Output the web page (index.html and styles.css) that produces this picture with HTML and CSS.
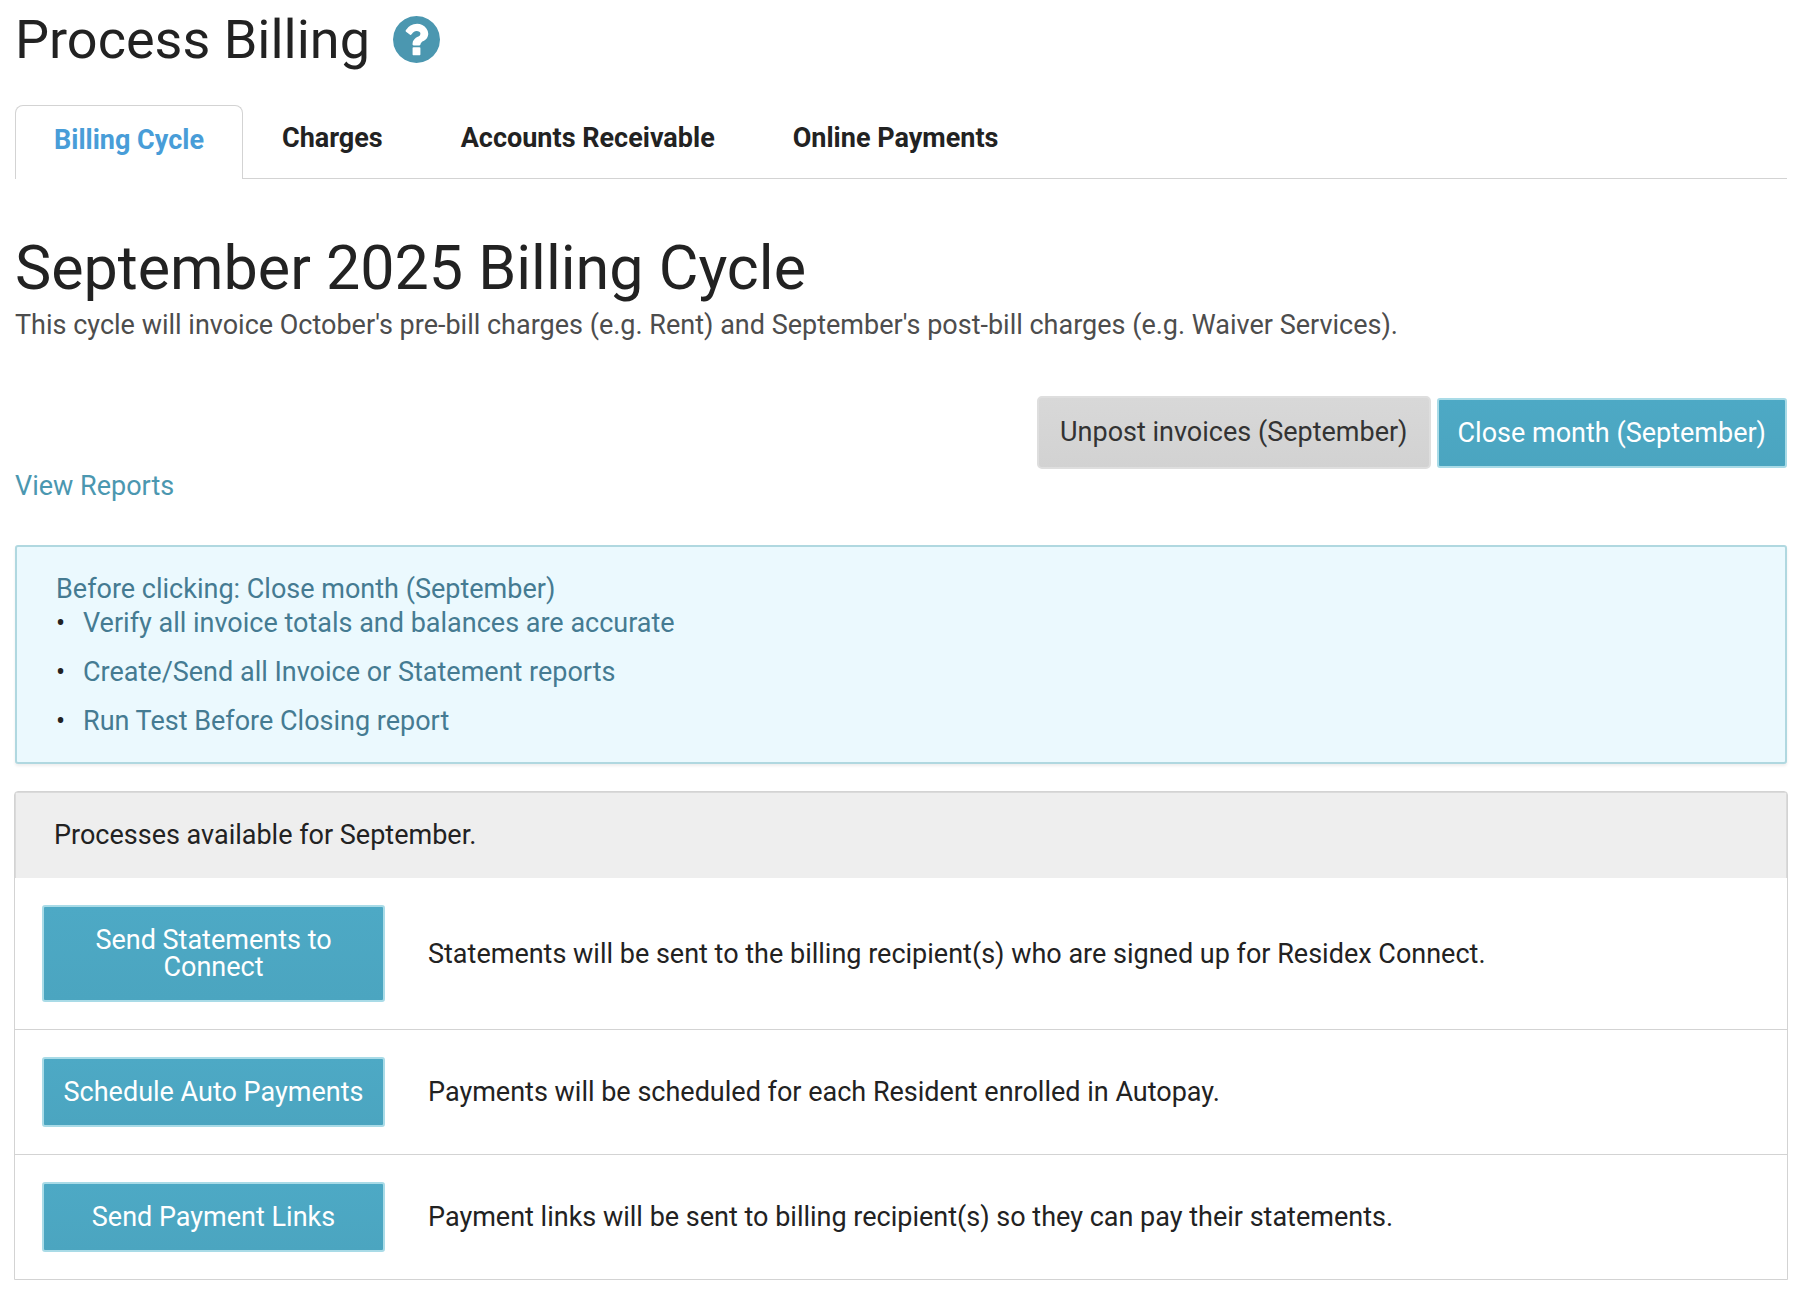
FILE: index.html
```html
<!DOCTYPE html>
<html lang="en">
<head>
  <meta charset="UTF-8">
  <title>Process Billing</title>
  <link rel="stylesheet" href="styles.css">
</head>
<body>
  <header class="page-header">
    <h1>Process Billing</h1>
    <a href="#" class="help" aria-label="Help">
      <svg viewBox="128 128 1536 1536" width="47" height="47" aria-hidden="true">
        <path fill="currentColor" d="M1024 1376v-192q0-14-9-23t-23-9h-192q-14 0-23 9t-9 23v192q0 14 9 23t23 9h192q14 0 23-9t9-23zM1280 704q0-88-55.5-163t-138.5-116-170-41q-243 0-371 213-15 24 8 42l132 100q7 6 19 6 16 0 25-12 53-68 86-92 34-24 86-24 48 0 85.500 26t37.500 59q0 38-20 61t-68 45q-63 28-115.500 86.500t-52.500 125.500v36q0 14 9 23t23 9h192q14 0 23-9t9-23q0-19 21.500-49.500t54.500-49.500q32-18 49-28.500t46-35 44.500-48 28-60.500 12.500-81zM1664 896q0 209-103 385.500t-279.500 279.500-385.500 103-385.500-103-279.500-279.500-103-385.500 103-385.500 279.500-279.500 385.500-103 385.500 103 279.500 279.500 103 385.500z"/>
      </svg>
    </a>
  </header>

  <nav class="tabs">
    <a href="#" class="tab active">Billing Cycle</a>
    <a href="#" class="tab">Charges</a>
    <a href="#" class="tab">Accounts Receivable</a>
    <a href="#" class="tab">Online Payments</a>
  </nav>

  <main>
    <h2>September 2025 Billing Cycle</h2>
    <p class="description">This cycle will invoice October's pre-bill charges (e.g. Rent) and September's post-bill charges (e.g. Waiver Services).</p>

    <div class="actions">
      <button class="btn btn-default">Unpost invoices (September)</button>
      <button class="btn btn-primary">Close month (September)</button>
    </div>
    <a href="#" class="reports">View Reports</a>

    <div class="alert">
      <p>Before clicking: Close month (September)</p>
      <ul>
        <li>Verify all invoice totals and balances are accurate</li>
        <li>Create/Send all Invoice or Statement reports</li>
        <li>Run Test Before Closing report</li>
      </ul>
    </div>

    <section class="panel">
      <div class="panel-heading">Processes available for September.</div>
      <div class="process">
        <button class="btn btn-primary">Send Statements to Connect</button>
        <p>Statements will be sent to the billing recipient(s) who are signed up for Residex Connect.</p>
      </div>
      <div class="process">
        <button class="btn btn-primary">Schedule Auto Payments</button>
        <p>Payments will be scheduled for each Resident enrolled in Autopay.</p>
      </div>
      <div class="process">
        <button class="btn btn-primary">Send Payment Links</button>
        <p>Payment links will be sent to billing recipient(s) so they can pay their statements.</p>
      </div>
    </section>
  </main>
</body>
</html>
```
FILE: styles.css
```css
* { box-sizing: border-box; }
body { font-family: Roboto, sans-serif; font-size: 27px; line-height: 34px; color: #222; background: #fff; margin: 0; padding: 8px 17px 16px 15px; }
h1, h2, p, ul { margin: 0; padding: 0; }
h1, h2 { font-weight: 400; }
h1 { font-size: 54px; line-height: 64px; }
h2 { font-size: 61px; line-height: 72px; }
a { color: #4b97b0; text-decoration: none; }

.page-header { display: flex; align-items: center; gap: 23px; }
.help { display: flex; }
.help svg { margin-bottom: 2px; }

.tabs { display: flex; margin-top: 33px; border-bottom: 1px solid #d3d3d3; }
.tab { padding: 15px 38px 22px; border: 1px solid transparent; border-bottom: 0; color: #222; font-weight: 700; }
.tab.active { margin-bottom: -1px; padding-top: 17px; border-color: #d3d3d3; border-radius: 8px 8px 0 0; background: #fff; color: #489dd8; }

h2 { margin-top: 53px; }
.description { margin-top: 4px; color: #4d4d4d; }

.actions { display: flex; justify-content: flex-end; align-items: center; gap: 6px; margin-top: 54px; }
.btn { font-family: inherit; font-size: 27px; line-height: 27px; padding: 20px 19px 19px; border: 2px solid #a9dbe7; border-radius: 3px; cursor: pointer; }
.btn-primary { background: linear-gradient(#4da9c5, #4ba5c0); color: #fff; }
.btn-default { padding: 21px; border-color: #dedede; border-radius: 5px; background: linear-gradient(#d8d8d8, #d2d2d2); color: #333; }
.reports { display: inline-block; }

.alert { margin-top: 42px; padding: 25px 39px 24px; border: 2px solid #b0d8e0; border-radius: 3px; background: #ebf9fe; color: #457b92; box-shadow: 0 2px 3px #eee; }
.alert ul { list-style: none; }
.alert li { position: relative; padding-left: 27px; margin-bottom: 15px; }
.alert li:last-child { margin-bottom: 0; }
.alert li::before { content: "•"; position: absolute; left: 0; color: #222; }

.panel { margin: 27px -1px 0; border: 1px solid #d3d3d3; border-radius: 4px 4px 0 0; }
.panel-heading { padding: 25px 38px 26px; border: 1px solid #dadada; border-bottom: 0; background: #eee; }
.process { display: grid; grid-template-columns: 343px 1fr; align-items: center; gap: 43px; padding: 27px; border-bottom: 1px solid #d3d3d3; }
.process:last-child { border-bottom: 0; }
```
